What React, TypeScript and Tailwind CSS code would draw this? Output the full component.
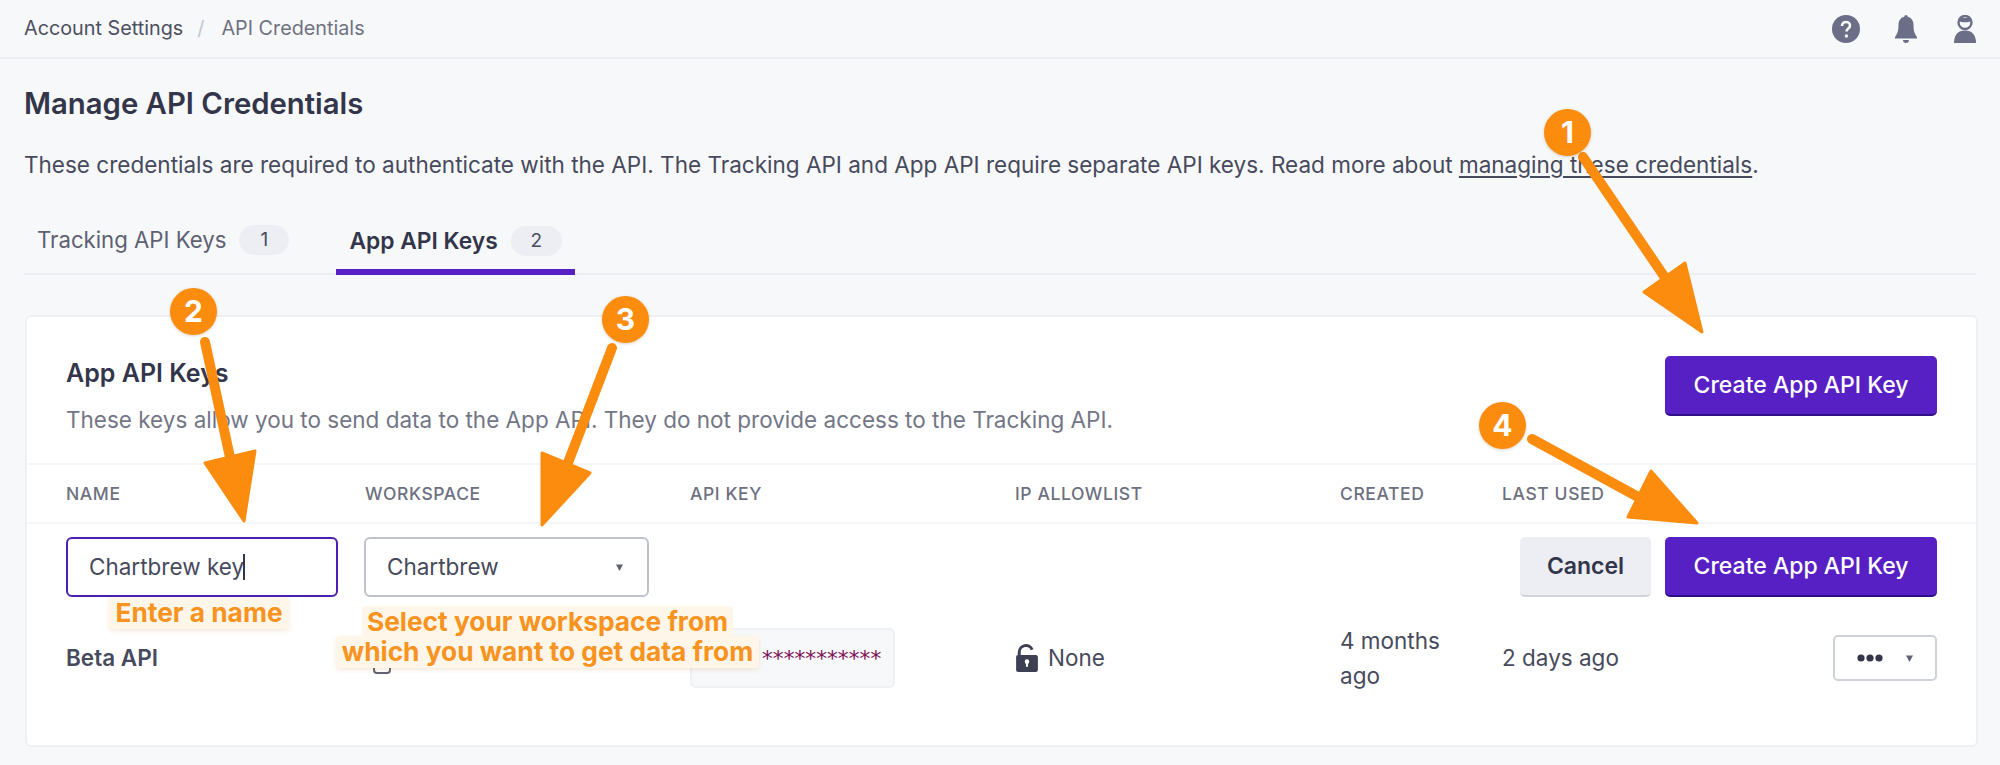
import React from "react";

const Caret = ({ className = "" }: { className?: string }) => (
  <svg width="9" height="9" viewBox="0 0 9 9" className={className}>
    <path d="M1 1.5h7L4.5 8z" fill="#5f6272" />
  </svg>
);

const Badge = ({ n, className }: { n: string; className: string }) => (
  <div
    className={`absolute flex h-[47px] w-[47px] items-center justify-center rounded-full bg-[#fb8c0e] text-[30px] font-bold text-white shadow-[0_1px_3px_rgba(120,70,0,0.25)] ${className}`}
  >
    {n}
  </div>
);

function Arrows() {
  const arrows = [
    { line: "M1583 157L1668 282", head: "1702,332 1685,263 1644,292" },
    { line: "M205 342L231 462", head: "244,521 205,463 255,451" },
    { line: "M612 348L566 468", head: "542,525 542,453 590,473" },
    { line: "M1532 439L1640 498", head: "1697,523 1651,471 1628,517" },
  ];
  return (
    <svg className="pointer-events-none absolute top-0 left-0" width="2000" height="765" viewBox="0 0 2000 765">
      {arrows.map((a) => (
        <g key={a.line}>
          <path d={a.line} stroke="#fb8c0e" strokeWidth="10" strokeLinecap="round" fill="none" />
          <polygon points={a.head} fill="#fb8c0e" stroke="#fb8c0e" strokeWidth="3" strokeLinejoin="round" />
        </g>
      ))}
    </svg>
  );
}

const headCols = [
  ["NAME", "w-[299px]"],
  ["WORKSPACE", "w-[325px]"],
  ["API KEY", "w-[325px]"],
  ["IP ALLOWLIST", "w-[325px]"],
  ["CREATED", "w-[162px]"],
  ["LAST USED", "w-[200px]"],
];

export default function App() {
  return (
    <div className="relative h-[765px] w-[2000px] overflow-hidden bg-[#f7f8fa] font-['Inter',sans-serif] text-[#3d3f52]">
      <header className="flex h-[59px] items-center justify-between border-b-2 border-[#eceef3] pr-[21px] pl-[24px]">
        <div className="flex items-center text-[19.8px] text-[#4c4f60]">
          <span>Account Settings</span>
          <span className="mx-[14px] text-[#c3c6d0]">/</span>
          <span className="ml-[3px] text-[#6f7282]">API Credentials</span>
        </div>
        <div className="flex items-center gap-[31px]">
          <svg width="28" height="28" viewBox="0 0 28 28" className="-translate-x-px">
            <circle cx="14" cy="14" r="14" fill="#6b6e86" />
            <path d="M10 11c0-2.500 1.800-4 4-4s4 1.400 4 3.600c0 3-3.500 3-3.500 6" fill="none" stroke="#f7f8fa" strokeWidth="2.600" />
            <circle cx="14.400" cy="21" r="1.700" fill="#f7f8fa" />
          </svg>
          <svg width="28" height="28" viewBox="0 0 28 28">
            <path d="M14 0c1 0 1.700.7 1.700 1.800 3.800 1 5.800 4 5.800 8 0 6 1 9 3.500 12.200v1.500H3V22c2.500-3.200 3.500-6.200 3.500-12.200 0-4 2-7 5.800-8C12.300.7 13 0 14 0z" fill="#6b6e86" />
            <path d="M11 25h6c0 1.700-1.300 3-3 3s-3-1.300-3-3z" fill="#6b6e86" />
          </svg>
          <svg width="28" height="28" viewBox="-2 0 28 28">
            <circle cx="12" cy="7.500" r="6.500" fill="#f7f8fa" stroke="#6b6e86" strokeWidth="2.400" />
            <path d="M6.500 6.500c2 .9 9 .9 11 0l-1 -3.500h-9z" fill="#6b6e86" />
            <path d="M1 28c0-8 4-12.500 11-12.500S23 20 23 28z" fill="#6b6e86" />
          </svg>
        </div>
      </header>

      <main className="px-[24px]">
        <h1 className="mt-[27px] text-[29.300px] leading-[36px] font-semibold text-[#33354a]">Manage API Credentials</h1>
        <p className="mt-[28px] text-[22.530px] leading-[30px] text-[#474a5c]">
          These credentials are required to authenticate with the API. The Tracking API and App API require separate API keys. Read more about{" "}
          <span className="underline underline-offset-[3px]">managing these credentials</span>.
        </p>

        <nav className="mt-[35px] flex h-[60px] items-stretch border-b-2 border-[#eceef3]">
          <div className="flex items-center px-[13px] pb-[8px] text-[22.200px] text-[#5e6172]">
            Tracking API Keys
            <span className="ml-[13px] flex h-[30px] w-[50px] items-center justify-center rounded-full bg-[#eceef3] text-[19px] text-[#474a5c]">1</span>
          </div>
          <div className="-mb-[2px] ml-[34px] flex w-[239px] items-center border-b-[6px] border-[#5720c4] pb-[2px] pl-[13px] text-[22.800px] font-semibold text-[#33354a]">
            App API Keys
            <span className="ml-[13px] flex h-[30px] w-[51px] items-center justify-center rounded-full bg-[#eceef3] text-[19px] font-normal text-[#474a5c]">2</span>
          </div>
        </nav>

        <section className="mt-[40px] ml-px h-[432px] w-[1953px] rounded-[6px] border-2 border-[#eef0f4] bg-white">
          <div className="flex h-[146px] items-start justify-between pr-[39px] pl-[39px]">
            <div>
              <h2 className="mt-[40px] text-[25px] leading-[32px] font-semibold text-[#33354a]">App API Keys</h2>
              <p className="mt-[16px] text-[22.500px] leading-[30px] text-[#737686]">
                These keys allow you to send data to the App API. They do not provide access to the Tracking API.
              </p>
            </div>
            <button className="mt-[39px] flex h-[60px] w-[272px] items-center justify-center rounded-[5px] border-b-2 border-[#2f0f86] bg-[#5720c4] text-[23px] font-medium text-white">
              Create App API Key
            </button>
          </div>

          <div className="flex h-[61px] items-center border-y-2 border-[#f5f6f9] pt-[2px] pl-[39px] text-[17.500px] font-medium tracking-[0.6px] text-[#6d7080]">
            {headCols.map(([label, w]) => (
              <div key={label} className={w}>{label}</div>
            ))}
          </div>

          <div className="flex h-[89px] items-start pt-[13px] pr-[39px] pl-[39px] text-[22.500px]">
            <div className="flex h-[60px] w-[272px] items-center rounded-[6px] border-2 border-[#4c1fb0] pl-[21px] text-[#474a5c]">
              Chartbrew key<span className="ml-[-1px] h-[26px] w-[2px] bg-[#33354a]" />
            </div>
            <div className="ml-[26px] flex h-[60px] w-[285px] items-center justify-between rounded-[6px] border-2 border-[#bfc1cc] pr-[23px] pl-[21px] text-[#474a5c]">
              Chartbrew
              <Caret />
            </div>
            <button className="ml-auto flex h-[60px] w-[131px] items-center justify-center rounded-[5px] border-b-2 border-[#d2d4dc] bg-[#eceef3] text-[23px] font-semibold text-[#33354a]">
              Cancel
            </button>
            <button className="ml-[14px] flex h-[60px] w-[272px] items-center justify-center rounded-[5px] border-b-2 border-[#2f0f86] bg-[#5720c4] text-[23px] font-medium text-white">
              Create App API Key
            </button>
          </div>

          <div className="flex h-[90px] items-center pr-[39px] pl-[39px] text-[22.500px] text-[#474a5c]">
            <div className="w-[299px] font-semibold">Beta API</div>
            <div className="w-[325px] pl-[8px]">
              <svg width="18" height="22" viewBox="0 0 18 22" className="mt-[10px]">
                <rect x="1" y="3" width="16" height="18" rx="3" fill="none" stroke="#5e6172" strokeWidth="2" />
                <path d="M5 15h8" stroke="#5e6172" strokeWidth="2" />
              </svg>
            </div>
            <div className="w-[325px]">
              <div className="flex h-[60px] w-[205px] items-center justify-end overflow-hidden rounded-[6px] border-2 border-[#eef0f4] bg-[#f7f8fa] pr-[13px] font-['DejaVu_Sans_Mono',monospace] text-[22px] tracking-[-2.4px] text-[#7d1257]">
                ***********
              </div>
            </div>
            <div className="flex w-[325px] items-center gap-[9px]">
              <svg width="24" height="28" viewBox="0 0 23 27">
                <path d="M4 12V8a6.500 6.500 0 0 1 12.500 -2.500" fill="none" stroke="#3d3f52" strokeWidth="2.800" />
                <rect x="1" y="10.500" width="21" height="16.500" rx="2" fill="#3d3f52" />
                <circle cx="11.500" cy="17" r="2.200" fill="#fff" />
                <rect x="10.500" y="17" width="2" height="5" fill="#fff" />
              </svg>
              None
            </div>
            <div className="w-[162px] leading-[35px]">4 months<br />ago</div>
            <div>2 days ago</div>
            <div className="ml-auto flex h-[46px] w-[104px] items-center justify-center gap-[22px] rounded-[5px] border-2 border-[#cfd1d9] bg-white">
              <svg width="26" height="8" viewBox="0 0 26 8" fill="#33354a">
                <circle cx="4" cy="4" r="3.600" />
                <circle cx="13" cy="4" r="3.600" />
                <circle cx="22" cy="4" r="3.600" />
              </svg>
              <Caret />
            </div>
          </div>
        </section>
      </main>

      <Arrows />
      <Badge n="1" className="top-[109px] left-[1544px]" />
      <Badge n="2" className="top-[288px] left-[170px]" />
      <Badge n="3" className="top-[296px] left-[602px]" />
      <Badge n="4" className="top-[402px] left-[1479px]" />

      <div className="absolute top-[597px] left-[109px] flex h-[32px] w-[180px] items-center justify-center rounded-[4px] bg-[#fff6ea] text-[26.300px] font-bold text-[#f7931e] shadow-[0_2px_4px_rgba(200,150,90,0.2)]">
        Enter a name
      </div>
      <div className="absolute top-[606px] left-[362px] flex h-[32px] w-[371px] items-center justify-center rounded-[4px] bg-[#fff6ea] text-[26.300px] font-bold text-[#f7931e]">
        Select your workspace from
      </div>
      <div className="absolute top-[636px] left-[336px] flex h-[32px] w-[423px] items-center justify-center rounded-[4px] bg-[#fff6ea] text-[26.300px] font-bold text-[#f7931e] shadow-[0_2px_4px_rgba(200,150,90,0.2)]">
        which you want to get data from
      </div>
    </div>
  );
}
